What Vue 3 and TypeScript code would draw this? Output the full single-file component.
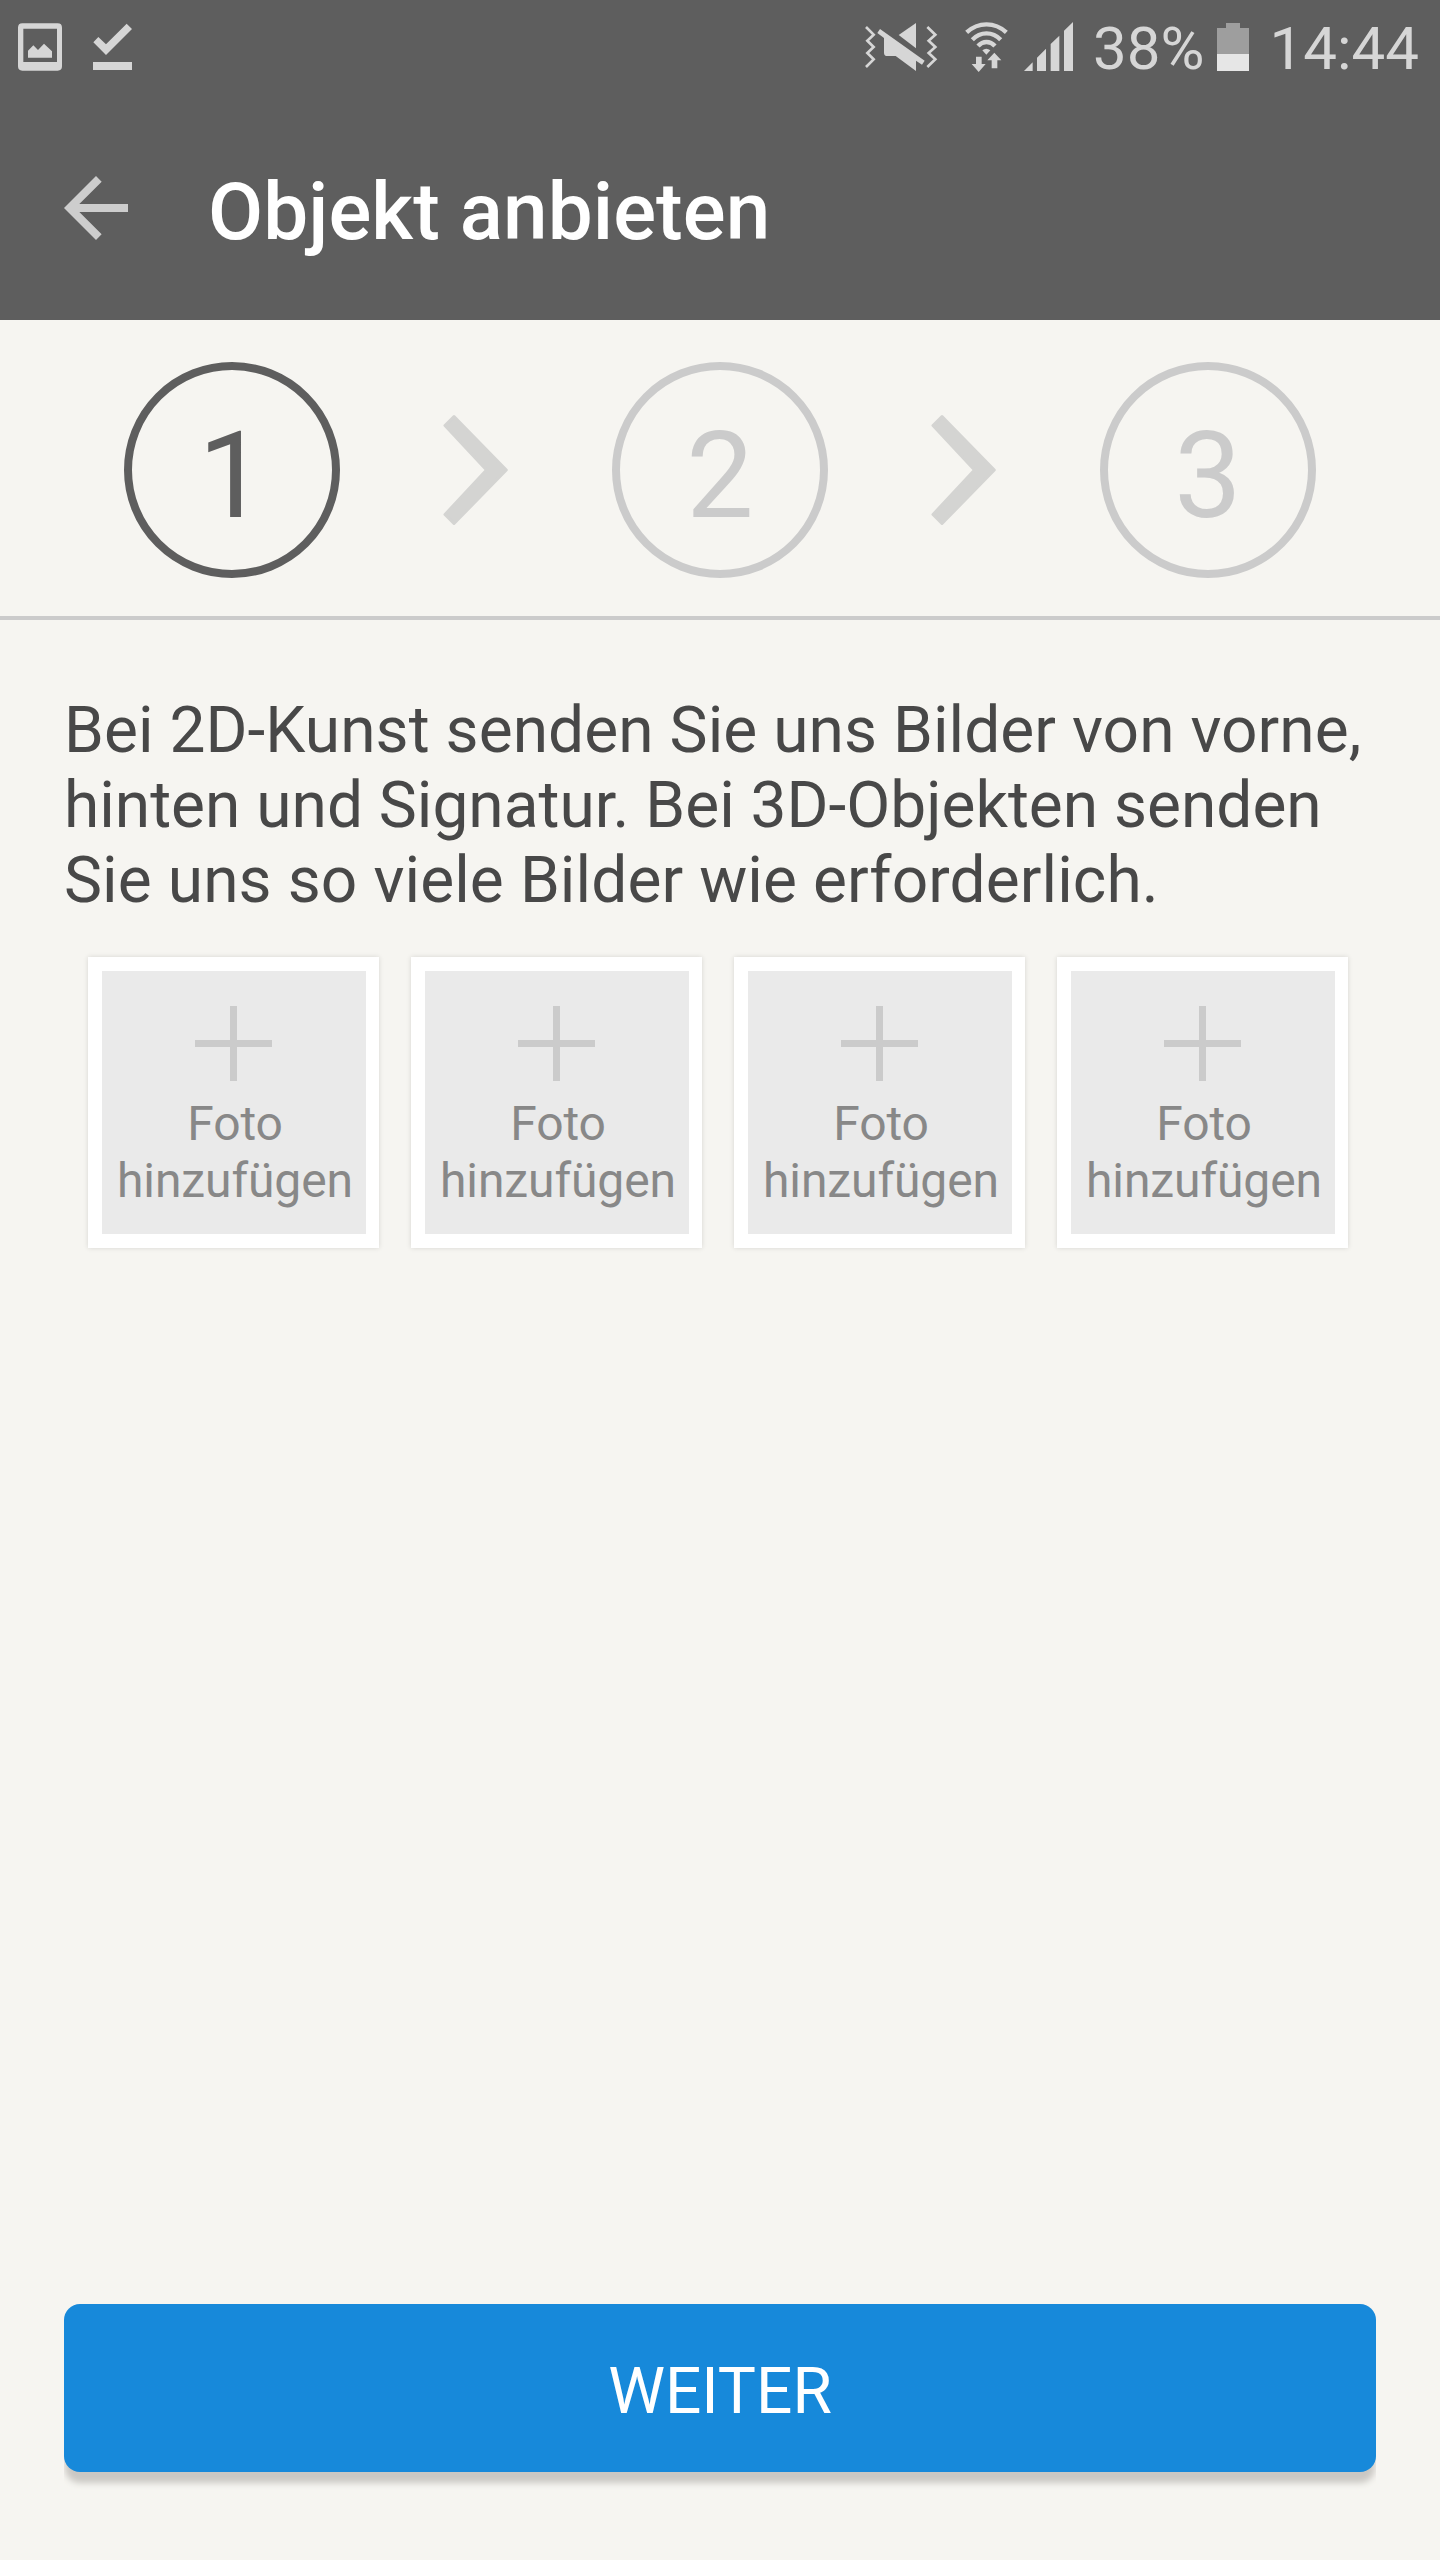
<script setup lang="ts">
interface Step {
  label: string
  active: boolean
}

const steps: Step[] = [
  { label: '1', active: true },
  { label: '2', active: false },
  { label: '3', active: false },
]

const photoSlots: number[] = [1, 2, 3, 4]
</script>

<template>
  <div class="screen">
    <header class="header">
      <div class="status">
        <svg class="ic-notifications" viewBox="0 0 420 300" fill="#d6d6d6">
          <path fill-rule="evenodd" d="M67 70H173Q186 70 186 83V199Q186 212 173 212H67Q54 212 54 199V83Q54 70 67 70ZM70 86V186H171V86Z" />
          <path d="M84 173V152L100 136L114 150L132 131L156 154V173Z" />
          <path d="M280 127L295 111L318 133L380 71L396 87L318 165Z" />
          <path d="M279 186H396V210H279Z" />
        </svg>
        <svg class="ic-signals" viewBox="30 0 660 300" fill="#d6d6d6">
          <g fill="none" stroke="#d6d6d6" stroke-width="8">
            <path d="M48 81L71 104L52 122L71 141L52 159L71 178L48 201" />
            <path d="M232 81L256 104L236 122L256 141L236 159L256 178L232 201" />
          </g>
          <path d="M146 105L198 69V145Z" />
          <path d="M90 87L224 182L216 194L198 182V213L137 168H112Q102 168 102 158V114L82 99Z" />
          <g fill="none" stroke="#d6d6d6" stroke-width="13">
            <path d="M350 97Q376 73 409.500 73Q443 73 469 97" />
            <path d="M367 119Q385 100 409.500 100Q434 100 452 119" />
            <path d="M384 138Q395 126 409.500 126Q424 126 435 138" />
          </g>
          <path d="M397 151Q409 141 421 151L409 164Z" />
          <path d="M378 170H395V192H407L386 216L365 192H378Z" />
          <path d="M425 205H442V181H454L433 158L412 181H425Z" />
          <path d="M522 213L548 187V213ZM561 213V173L588 146V213ZM602 213V132L628 107V213ZM642 213V92L669 66V213Z" />
        </svg>
        <span class="percent">38%</span>
        <svg class="ic-battery" viewBox="0 0 32 48">
          <path fill="#9e9e9e" d="M9 0H23V5H32V31H0V5H9Z" />
          <path fill="#e6e6e6" d="M0 31H32V48H0Z" />
        </svg>
        <span class="clock">14:44</span>
      </div>
      <div class="appbar">
        <svg class="back" viewBox="0 0 24 24">
          <path fill="#cdcdcd" d="M20 11H7.830l5.590-5.590L12 4l-8 8 8 8 1.410-1.410L7.830 13H20v-2z" />
        </svg>
        <h1 class="title">Objekt anbieten</h1>
      </div>
    </header>

    <nav class="steps">
      <template v-for="(step, i) in steps" :key="step.label">
        <svg v-if="i > 0" class="chevron" viewBox="0 0 66 112">
          <path fill="#d4d4d2" stroke="#d4d4d2" stroke-width="3" stroke-linejoin="round" d="M2 11.500L11 2.500L63.300 56L11 109.500L2 100.500L43.500 56Z" />
        </svg>
        <div class="step" :class="{ active: step.active }">{{ step.label }}</div>
      </template>
    </nav>

    <main class="content">
      <p class="hint">
        <span class="wide">Bei 2D-Kunst senden Sie uns Bilder von vorne,</span><br />hinten und Signatur. Bei 3D-Objekten senden<br /><span class="wider">Sie uns so viele Bilder wie erforderlich.</span>
      </p>
      <div class="photos">
        <div v-for="slot in photoSlots" :key="slot" class="photo">
          <div class="photo-inner">
            <svg class="plus" viewBox="0 0 77 75">
              <path fill="#cbcbcb" d="M35 0H42V34H77V41H42V75H35V41H0V34H35Z" />
            </svg>
            <span class="photo-label">Foto<br />hinzufügen</span>
          </div>
        </div>
      </div>
    </main>

    <footer class="footer">
      <button class="next" type="button">WEITER</button>
    </footer>
  </div>
</template>

<style>
body {
  margin: 0;
  background: #f6f5f1;
}
</style>

<style scoped>
.screen {
  display: flex;
  flex-direction: column;
  width: 1440px;
  height: 2560px;
  overflow: hidden;
  background: #f6f5f1;
  font-family: Roboto, 'Noto Sans', sans-serif;
}

.header {
  flex: none;
  height: 320px;
  background: #5e5e5e;
}

.status {
  display: flex;
  align-items: flex-start;
  height: 96px;
  color: #d6d6d6;
  font-size: 60px;
  line-height: 98px;
  white-space: nowrap;
}

.ic-notifications {
  width: 140px;
  height: 100px;
}

.ic-signals {
  width: 220px;
  height: 100px;
  margin-left: 720px;
}

.percent {
  width: 124px;
  margin-left: 13px;
}

.ic-battery {
  width: 32px;
  height: 48px;
  margin-top: 23px;
}

.clock {
  margin-left: auto;
  margin-right: 21px;
}

.appbar {
  display: flex;
  align-items: center;
  height: 224px;
  padding-left: 48px;
}

.back {
  width: 96px;
  height: 96px;
}

.title {
  margin: 0 0 0 64px;
  padding-top: 7px;
  color: #fff;
  font-size: 80px;
  font-weight: 500;
  line-height: 94px;
  letter-spacing: 0.08px;
}

.steps {
  display: flex;
  flex: none;
  align-items: center;
  justify-content: space-between;
  box-sizing: border-box;
  height: 300px;
  padding: 0 124px;
  border-bottom: 4px solid #cbcbcb;
  border-top: 4px solid transparent;
}

.step {
  box-sizing: border-box;
  width: 216px;
  height: 216px;
  padding-top: 6px;
  border: 8px solid #cbcbcb;
  border-radius: 50%;
  color: #cbcbcb;
  font-size: 120px;
  line-height: 200px;
  text-align: center;
}

.step.active {
  border-color: #5e5e5e;
  color: #5e5e5e;
}

.chevron {
  width: 66px;
  height: 112px;
}

.content {
  flex: 1;
  padding: 73px 64px 0;
}

.hint {
  margin: 0;
  color: #484848;
  font-size: 64px;
  line-height: 75px;
  white-space: nowrap;
}

.wide {
  letter-spacing: 0.06px;
}

.wider {
  letter-spacing: 0.1px;
}

.photos {
  display: flex;
  gap: 32px;
  margin-top: 39px;
  padding-left: 24px;
}

.photo {
  flex: none;
  box-sizing: border-box;
  width: 291px;
  height: 291px;
  padding: 14px 13px 14px 14px;
  background: #fff;
  box-shadow: 0 0 5px rgba(0, 0, 0, 0.13);
}

.photo-inner {
  display: flex;
  flex-direction: column;
  align-items: center;
  box-sizing: border-box;
  height: 263px;
  padding-top: 35px;
  background: #eaeaea;
}

.plus {
  width: 77px;
  height: 75px;
  margin-right: 1px;
}

.photo-label {
  margin-top: 14px;
  padding-left: 2px;
  color: #888;
  font-size: 48px;
  line-height: 57px;
  letter-spacing: -0.1px;
  text-align: center;
}

.footer {
  flex: none;
  height: 256px;
  margin: 0 64px;
  overflow: hidden;
}

.next {
  display: block;
  box-sizing: border-box;
  width: 100%;
  height: 168px;
  padding: 7px 0 0;
  border: 0;
  border-radius: 16px;
  background: #1789da;
  box-shadow: 0 12px 6px -1px #cac8c4;
  color: #fff;
  font: 400 64px/161px Roboto, 'Noto Sans', sans-serif;
}
</style>
